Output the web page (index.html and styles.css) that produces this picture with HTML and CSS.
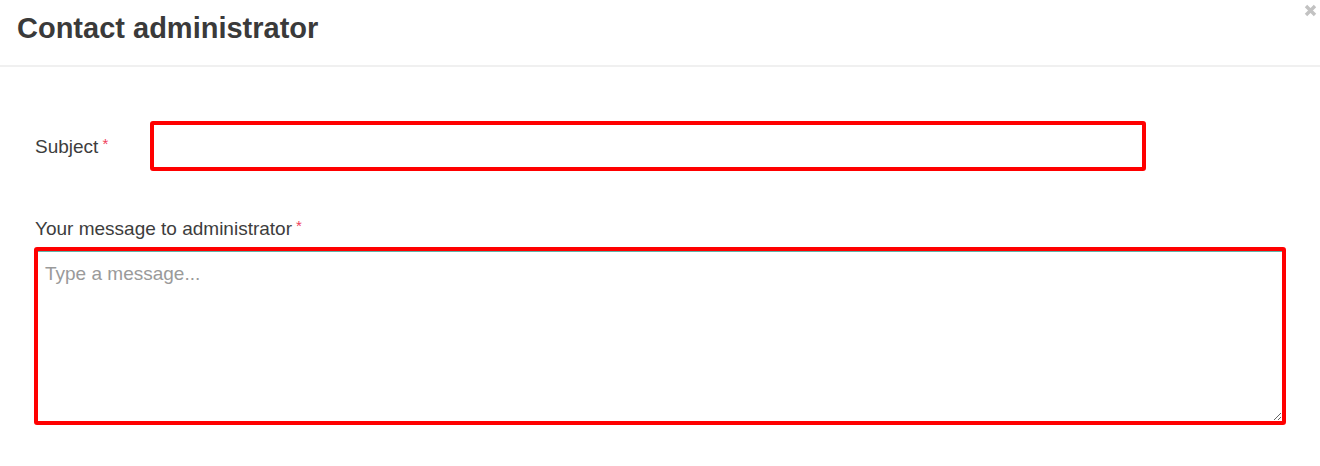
FILE: index.html
```html
<!DOCTYPE html>
<html>
<head>
<meta charset="utf-8">
<link rel="stylesheet" href="styles.css">
</head>
<body>
<div class="modal">
  <div class="modal-header">
    <h4 class="modal-title">Contact administrator</h4>
    <button class="close" type="button" aria-label="Close">
      <svg width="13" height="13" viewBox="0 0 13 13"><path d="M2 2 L11 11 M11 2 L2 11" stroke="#c2c2c2" stroke-width="3.4" stroke-linecap="butt" fill="none"/></svg>
    </button>
  </div>
  <form class="modal-body">
    <div class="form-row">
      <label class="label label-inline">Subject<span class="req">*</span></label>
      <input class="input" type="text">
    </div>
    <label class="label label-block">Your message to administrator<span class="req">*</span></label>
    <textarea class="textarea" placeholder="Type a message..."></textarea>
  </form>
</div>
</body>
</html>
```
FILE: styles.css
```css
html, body {
  margin: 0;
  padding: 0;
  background: #ffffff;
}
body {
  font-family: "Liberation Sans", Arial, sans-serif;
  color: #333333;
}
.modal {
  width: 1320px;
}
.modal-header {
  display: flex;
  justify-content: space-between;
  align-items: flex-start;
  padding: 14px 3px 0 17px;
  height: 51px;
  border-bottom: 2px solid #f0f0f0;
}
.modal-title {
  margin: 0;
  font-size: 29px;
  line-height: 29px;
  font-weight: bold;
  color: #3a3a3a;
}
.close {
  margin-top: -10px;
  padding: 0;
  border: 0;
  background: transparent;
  width: 13px;
  height: 13px;
  display: block;
}
.close svg {
  display: block;
}
.modal-body {
  display: flex;
  flex-direction: column;
  padding: 54px 34px 0 34px;
  margin: 0;
}
.form-row {
  display: flex;
  align-items: center;
  height: 50px;
}
.label {
  font-size: 19px;
  line-height: 27px;
  color: #3d3d3d;
}
.label-inline {
  width: 116px;
  padding-left: 1px;
  box-sizing: border-box;
}
.label-block {
  display: block;
  margin-top: 44px;
  padding-left: 1px;
}
.req {
  color: #f0405a;
  font-size: 15px;
  vertical-align: top;
  line-height: 16px;
  margin-left: 4px;
  position: relative;
  top: 3px;
}
.input {
  width: 996px;
  height: 50px;
  box-sizing: border-box;
  border: 4px solid #ff0000;
  border-radius: 3px;
  padding: 6px 10px;
  font-family: "Liberation Sans", Arial, sans-serif;
  font-size: 19px;
  outline: none;
  margin: 0;
}
.textarea {
  display: block;
  margin: 5px 0 0 0;
  width: 1252px;
  height: 178px;
  box-sizing: border-box;
  border: 4px solid #ff0000;
  border-radius: 3px;
  box-shadow: inset 0 1px 0 #5fb3a8;
  padding: 9px 7px;
  font-family: "Liberation Sans", Arial, sans-serif;
  font-size: 19px;
  line-height: 27px;
  color: #333333;
  outline: none;
  resize: vertical;
}
.textarea::placeholder {
  color: #9a9a9a;
}
```
